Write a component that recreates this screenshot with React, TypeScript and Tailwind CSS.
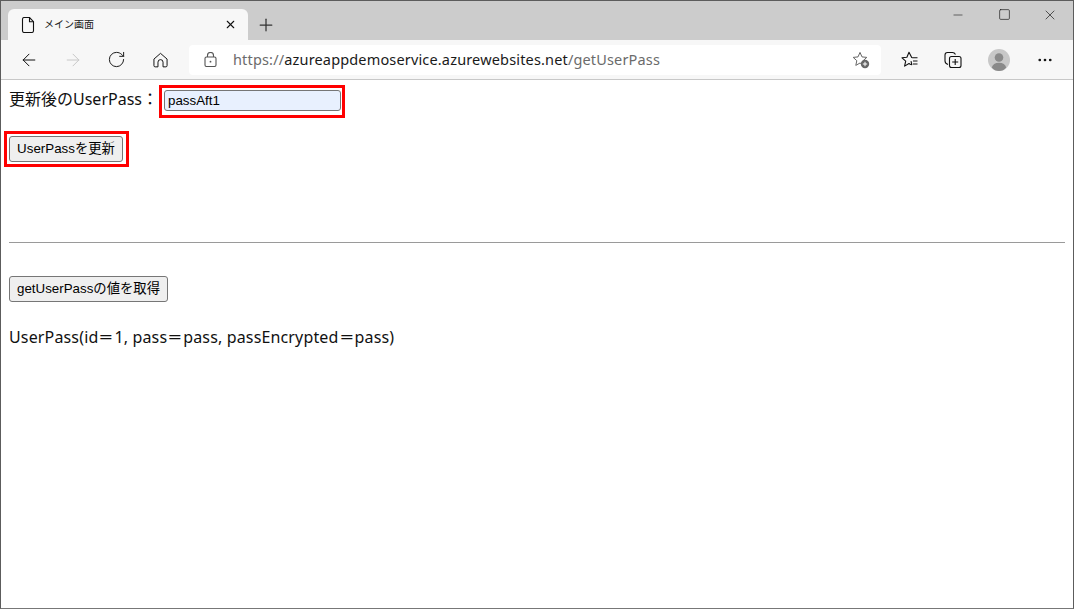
import { ArrowLeft, ArrowRight, Minus, MoreHorizontal, Plus, RotateCw, Square, X } from "lucide-react"

function FileIcon() {
  return (
    <svg width="14" height="16" viewBox="0 0 14 16" fill="none" stroke="#111" strokeWidth="1.1">
      <path d="M1.5 2.2q0-1.7 1.7-1.7h5.3l4 4.2v9q0 1.8-1.7 1.8H3.2q-1.7 0-1.7-1.8z" />
      <path d="M8.5.5v4.2h4" />
    </svg>
  )
}

function HomeIcon() {
  return (
    <svg width="15" height="16" viewBox="0 0 16 16" fill="none" stroke="#111" strokeWidth="1.05" strokeLinejoin="round">
      <path d="M1 7L8 .9 15 7v7q0 1.300-1.300 1.300H10.700v-5a2.700 2.700 0 0 0-5.400 0v5H2.300Q1 15.300 1 14z" />
    </svg>
  )
}

function LockIcon() {
  return (
    <svg width="13" height="15" viewBox="0 0 13 15" fill="none" stroke="#555" strokeWidth="1.1">
      <rect x="1" y="5" width="11" height="9.500" rx="1.500" />
      <path d="M3.500 5V3.500a3 3 0 0 1 6 0V5" />
      <circle cx="6.500" cy="9.700" r="0.900" fill="#555" stroke="none" />
    </svg>
  )
}

function AddFavoriteIcon() {
  return (
    <svg width="18" height="18" viewBox="0 0 18 18" fill="none">
      <path d="M8 1.400l2 4.500 4.800.5-3.600 3.200 1 4.700L8 12l-4.200 2.400 1-4.700L1.200 6.400 6 5.900z" stroke="#666" strokeWidth="1" strokeLinejoin="round" />
      <circle cx="13" cy="13" r="4.200" fill="#666" />
      <path d="M13 10.800v4.400M10.800 13h4.400" stroke="#fff" strokeWidth="1" />
    </svg>
  )
}

function FavoritesIcon() {
  return (
    <svg width="18" height="18" viewBox="0 0 18 18" fill="none" stroke="#111" strokeWidth="1.1">
      <path d="M11.600 6.600L10.700 6.400 8 1.200 5.900 6.200 1 6.800l3.700 3.300-1.100 5 4.400-2.600 1.200.7 1.600.4-.8-3.400" strokeLinejoin="round" />
      <path d="M11.500 6.800h5M12 10h4.500M12 13h4.500" />
    </svg>
  )
}

function CollectionsIcon() {
  return (
    <svg width="18" height="18" viewBox="0 0 18 18" fill="none" stroke="#111" strokeWidth="1.1">
      <path d="M4 13.500Q1 12.500 1 10V4q0-2.500 2.500-2.500h5q2 0 3 2" />
      <rect x="5.500" y="5.500" width="11.500" height="11" rx="2" />
      <path d="M11.200 8v6M8.200 11h6" />
    </svg>
  )
}

function ProfileIcon() {
  return (
    <div className="flex h-[22px] w-[22px] items-center justify-center rounded-full bg-[#c8c8c8]">
      <svg width="22" height="22" viewBox="0 0 22 22" fill="#8a8a8a">
        <circle cx="11" cy="8.500" r="4.300" />
        <path d="M3.800 18.500Q5 13.700 11 13.700t7.200 4.800Q15.500 22 11 22t-7.200-3.500z" />
      </svg>
    </div>
  )
}

// "=" は元の画面で幅が広い
function Eq() {
  return <span className="inline-block w-[16px] scale-x-[1.5] text-center">=</span>
}

export default function App() {
  return (
    <div className="flex h-[609px] w-[1074px] flex-col overflow-hidden border border-[#5c5c5c] border-b-[#777] bg-white font-['Liberation_Sans','Noto_Sans_CJK_JP',sans-serif] text-black">
      {/* タブバー */}
      <div className="flex h-[39px] shrink-0 items-end bg-[#cccccc] pl-[7px]">
        <div className="flex h-[31px] w-[240px] items-center rounded-t-[6px] bg-[#f7f7f7] pl-[13px] pr-[11px]">
          <FileIcon />
          <span className="ml-[9px] flex-1 text-[10px] text-[#222]">メイン画面</span>
          <X size={13} strokeWidth={2} color="#111" />
        </div>
        <div className="ml-[8px] flex h-[31px] w-[20px] items-center justify-center">
          <Plus size={20} strokeWidth={1.5} color="#333" />
        </div>
        <div className="ml-auto flex h-[31px] items-start">
          <div className="mt-[-1px] flex w-[46px] justify-center"><Minus size={14} strokeWidth={1} color="#111" /></div>
          <div className="mt-[-1px] flex w-[46px] justify-center"><Square size={13} strokeWidth={1.200} color="#111" /></div>
          <div className="mt-[-2px] flex w-[46px] justify-center"><X size={16} strokeWidth={1} color="#111" /></div>
        </div>
      </div>

      {/* ツールバー */}
      <div className="flex h-[40px] shrink-0 items-center border-b border-[#c8c8c8] bg-[#f7f7f7]">
        <div className="flex w-[188px] items-center pl-[18px]">
          <ArrowLeft size={20} strokeWidth={1.200} color="#111" />
          <ArrowRight size={20} strokeWidth={1.200} color="#c8c8c8" className="ml-[24px]" />
          <RotateCw size={19} strokeWidth={1.200} color="#111" className="ml-[24px]" />
          <div className="ml-[27px]"><HomeIcon /></div>
        </div>
        <div className="flex h-[30px] w-[692px] items-center rounded-[4px] bg-white pl-[15px] pr-[11px] font-['Noto_Sans',sans-serif] text-[14.500px]">
          <LockIcon />
          <span className="ml-[16px] whitespace-nowrap tracking-[0.160px] text-[#6b6b6b]">
            https://<span className="text-[#1a1a1a]">azureappdemoservice.azurewebsites.net</span>/getUserPass
          </span>
          <div className="ml-auto"><AddFavoriteIcon /></div>
        </div>
        <div className="ml-[20px] flex items-center">
          <FavoritesIcon />
          <div className="ml-[25px]"><CollectionsIcon /></div>
          <div className="ml-[26px]"><ProfileIcon /></div>
          <MoreHorizontal size={18} strokeWidth={1.600} color="#111" className="ml-[26px]" />
        </div>
      </div>

      {/* ページ本文 */}
      <div className="flex flex-1 flex-col pr-[8px]">
        <div className="ml-[8px] mt-[5px] flex items-start">
          <label className="mt-[2px] whitespace-nowrap font-['Noto_Sans','Noto_Sans_CJK_JP',sans-serif] text-[16px] text-[#111]">更新後のUserPass：</label>
          <div className="ml-[1px] border-[3px] border-[#ff0000] pb-[4px] pl-[2px] pr-[1px] pt-[2px]">
            <input
              readOnly
              value="passAft1"
              className="block h-[21px] w-[177px] rounded-[3px] border border-[#767676] bg-[#e8f0fe] px-[3px] text-[13.330px] text-black outline-none"
            />
          </div>
        </div>
        <div className="ml-[3px] mt-[13px] w-fit border-[3px] border-[#ff0000] py-[2px] pl-[2px] pr-[3px]">
          <button className="block h-[26px] w-[114px] rounded-[3px] border border-[#767676] bg-[#efefef] text-center text-[13.330px] text-black">
            UserPassを更新
          </button>
        </div>
        <hr className="ml-[8px] mt-[75px] border-t border-[#9a9a9a]" />
        <button className="ml-[8px] mt-[33px] h-[26px] w-[159px] rounded-[3px] border border-[#767676] bg-[#efefef] text-center text-[13.330px] text-black">
          getUserPassの値を取得
        </button>
        <p className="ml-[8px] mt-[24px] whitespace-nowrap font-['Noto_Sans','Noto_Sans_CJK_JP',sans-serif] text-[16px] leading-[22px] tracking-[0.150px] text-[#111]">
          UserPass(id<Eq />1, pass<Eq />pass, passEncrypted<Eq />pass)
        </p>
      </div>
    </div>
  )
}
